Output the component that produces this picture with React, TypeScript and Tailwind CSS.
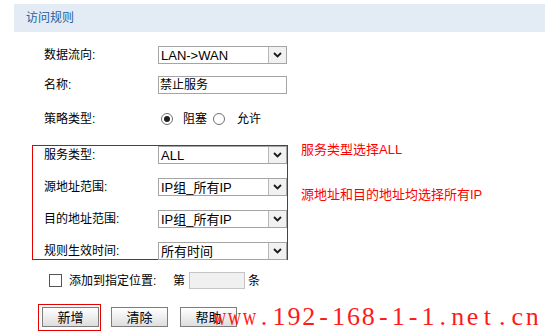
import React from 'react';

const cjk = { fontFamily: '"Liberation Sans", "Noto Sans CJK SC", sans-serif' };

const Chevron = () => (
  <svg width="9" height="6" viewBox="0 0 9 6">
    <path d="M1 1 L4.5 4.5 L8 1" fill="none" stroke="#1a1a1a" strokeWidth="1.8" />
  </svg>
);

const Select = ({ value }: { value: string }) => (
  <div className="w-[129px] h-[18px] border border-[#a5a5a5] bg-white flex items-center">
    <span className="flex-1 pl-[2px] text-[13px] leading-none text-black whitespace-nowrap">{value}</span>
    <div className="w-[18px] h-[16px] bg-[#f1f1f1] border-l border-[#b8b8b8] flex items-center justify-center">
      <Chevron />
    </div>
  </div>
);

const Row = ({ label, children }: { label: string; children: React.ReactNode }) => (
  <div className="flex items-center h-[18px]">
    <span className="w-[114px] text-[12px] text-black leading-none">{label}</span>
    {children}
  </div>
);

const Btn = ({ children }: { children: React.ReactNode }) => (
  <div className="w-[57px] h-[20px] border border-[#7d7d7d] bg-gradient-to-b from-white to-[#dedede] flex items-center justify-center text-[13px] text-black leading-none">
    {children}
  </div>
);

// watermark drawn as fixed-width serif cells (half-width look)
const mark = 'www.192-168-1-1.net.cn'.split('');

export default function App() {
  return (
    <div className="w-[545px] h-[334px] relative bg-white overflow-hidden" style={cjk}>
      <div className="ml-[14px] mt-[4px] h-[28px] bg-[#e3ebf4] flex items-center pl-[12px] text-[12px] text-[#235f9d]">
        访问规则
      </div>

      <div className="pl-[44px] mt-[14px] flex flex-col">
        <Row label="数据流向:">
          <Select value="LAN->WAN" />
        </Row>
        <div className="mt-[12px]">
          <Row label="名称:">
            <div className="w-[129px] h-[18px] border border-[#a5a5a5] bg-white flex items-center pl-[1px] text-[12px] leading-none">
              禁止服务
            </div>
          </Row>
        </div>
        <div className="mt-[16px]">
          <Row label="策略类型:">
            <div className="flex items-center text-[12px] leading-none">
              <span className="ml-[3px] w-[12px] h-[12px] rounded-full border border-[#707070] bg-white flex items-center justify-center">
                <span className="w-[6px] h-[6px] rounded-full bg-[#1e1e1e]" />
              </span>
              <span className="ml-[10px]">阻塞</span>
              <span className="ml-[6px] w-[12px] h-[12px] rounded-full border border-[#707070] bg-white" />
              <span className="ml-[12px]">允许</span>
            </div>
          </Row>
        </div>
      </div>

      <div className="ml-[32px] mt-[17px] flex items-start">
        <div className="w-[256px] h-[115px] border border-[#e60000] pl-[11px] flex flex-col gap-[14px]">
          <Row label="服务类型:">
            <Select value="ALL" />
          </Row>
          <Row label="源地址范围:">
            <Select value="IP组_所有IP" />
          </Row>
          <Row label="目的地址范围:">
            <Select value="IP组_所有IP" />
          </Row>
          <Row label="规则生效时间:">
            <Select value="所有时间" />
          </Row>
        </div>
        <div className="ml-[13px] -mt-[3px] flex flex-col text-[13px] leading-[16px] text-[#ff0000]">
          <span>服务类型选择ALL</span>
          <span className="mt-[29px]">源地址和目的地址均选择所有IP</span>
        </div>
      </div>

      <div className="ml-[49px] mt-[12px] flex items-center h-[17px] text-[12px] leading-none">
        <span className="w-[13px] h-[13px] border border-[#555555] bg-white" />
        <span className="ml-[7px] w-[104px]">添加到指定位置:</span>
        <span>第</span>
        <span className="ml-[4px] w-[56px] h-[17px] border border-[#c4c4c4] bg-[#f0f0f0]" />
        <span className="ml-[3px]">条</span>
      </div>

      <div className="ml-[38px] mt-[15px] flex items-start">
        <div className="border border-[#e60000] pl-[3px] pt-[2px] pr-[1px] pb-[3px]">
          <Btn>新增</Btn>
        </div>
        <div className="ml-[10px] mt-[3px]">
          <Btn>清除</Btn>
        </div>
        <div className="ml-[12px] mt-[3px]">
          <Btn>帮助</Btn>
        </div>
      </div>

      <div
        className="absolute left-[212px] top-[304px] flex text-[26px] leading-none text-[#ff1a1a]"
        style={{ fontFamily: '"Liberation Serif", serif' }}
      >
        {mark.map((c, i) => (
          <span key={i} className="w-[14.9px] flex justify-center">
            <span className={c === 'w' ? 'inline-block scale-x-[0.72]' : 'inline-block'}>{c}</span>
          </span>
        ))}
      </div>
    </div>
  );
}
